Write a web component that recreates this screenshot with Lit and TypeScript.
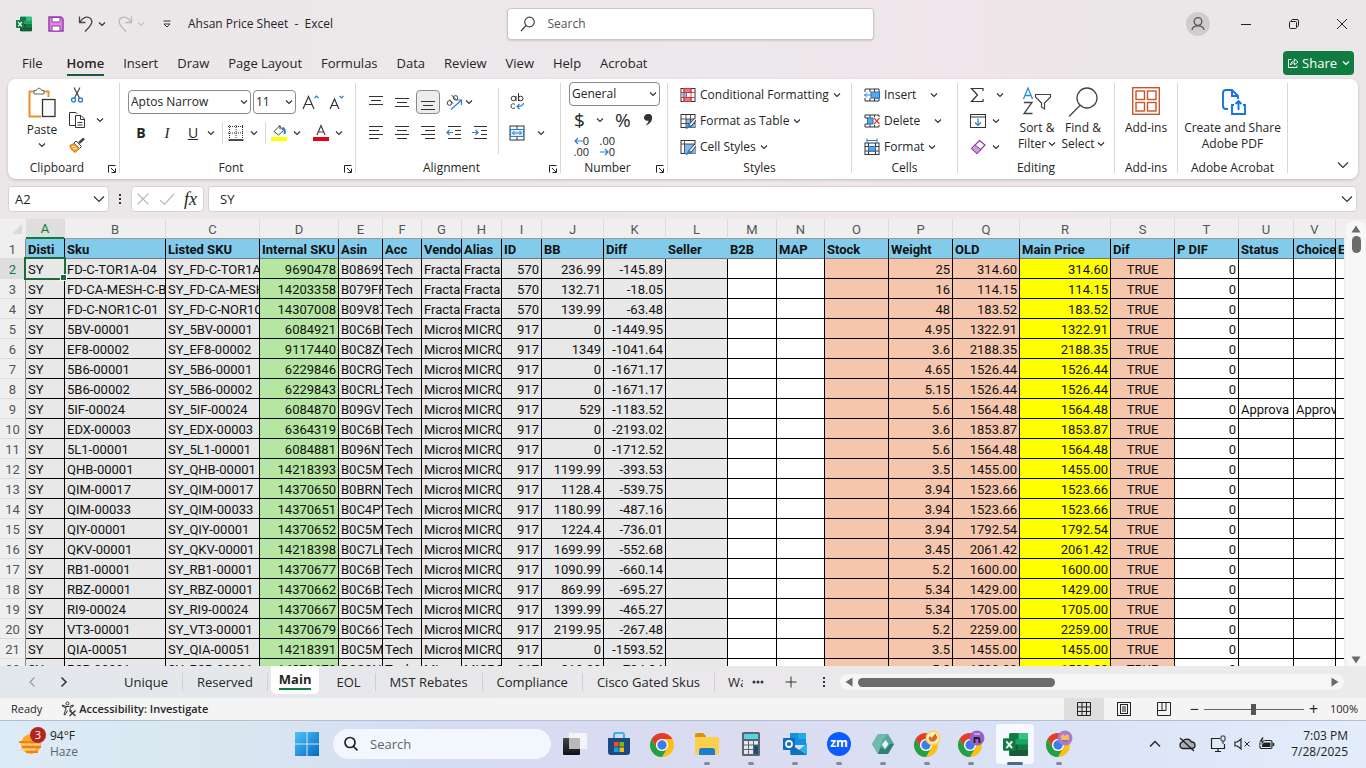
import { LitElement, html, svg, css, TemplateResult } from "lit";
import { customElement } from "lit/decorators.js";
import { classMap } from "lit/directives/class-map.js";

type Column = { id: string; width: number; title: string; kind: string };

const columns: Column[] = [
  { id: "A", width: 39, title: "Disti", kind: "grey" },
  { id: "B", width: 101, title: "Sku", kind: "grey" },
  { id: "C", width: 94, title: "Listed SKU", kind: "grey" },
  { id: "D", width: 79, title: "Internal SKU", kind: "green num" },
  { id: "E", width: 44, title: "Asin", kind: "grey" },
  { id: "F", width: 39, title: "Acc", kind: "grey" },
  { id: "G", width: 40, title: "Vendo", kind: "grey" },
  { id: "H", width: 40, title: "Alias", kind: "grey" },
  { id: "I", width: 40, title: "ID", kind: "grey num" },
  { id: "J", width: 62, title: "BB", kind: "grey num" },
  { id: "K", width: 62, title: "Diff", kind: "grey num" },
  { id: "L", width: 62, title: "Seller", kind: "grey" },
  { id: "M", width: 49, title: "B2B", kind: "" },
  { id: "N", width: 48, title: "MAP", kind: "" },
  { id: "O", width: 64, title: "Stock", kind: "peach" },
  { id: "P", width: 64, title: "Weight", kind: "peach num" },
  { id: "Q", width: 67, title: "OLD", kind: "peach num" },
  { id: "R", width: 91, title: "Main Price", kind: "yellow num" },
  { id: "S", width: 64, title: "Dif", kind: "peach mid" },
  { id: "T", width: 64, title: "P DIF", kind: "num" },
  { id: "U", width: 55, title: "Status", kind: "" },
  { id: "V", width: 42, title: "Choice", kind: "" },
  { id: "W", width: 64, title: "ETA", kind: "" },
];

// sku | internal sku | asin | vendor id | BB | diff | weight | price
const source = `FD-C-TOR1A-04|9690478|B08699|570|236.99|-145.89|25|314.60
FD-CA-MESH-C-B|14203358|B079FF|570|132.71|-18.05|16|114.15
FD-C-NOR1C-01|14307008|B09V87|570|139.99|-63.48|48|183.52
5BV-00001|6084921|B0C6BF|917|0|-1449.95|4.95|1322.91
EF8-00002|9117440|B0C8ZC|917|1349|-1041.64|3.6|2188.35
5B6-00001|6229846|B0CRG5|917|0|-1671.17|4.65|1526.44
5B6-00002|6229843|B0CRLS|917|0|-1671.17|5.15|1526.44
5IF-00024|6084870|B09GV5|917|529|-1183.52|5.6|1564.48
EDX-00003|6364319|B0C6BF|917|0|-2193.02|3.6|1853.87
5L1-00001|6084881|B096NT|917|0|-1712.52|5.6|1564.48
QHB-00001|14218393|B0C5M|917|1199.99|-393.53|3.5|1455.00
QIM-00017|14370650|B0BRN|917|1128.4|-539.75|3.94|1523.66
QIM-00033|14370651|B0C4PY|917|1180.99|-487.16|3.94|1523.66
QIY-00001|14370652|B0C5M|917|1224.4|-736.01|3.94|1792.54
QKV-00001|14218398|B0C7LH|917|1699.99|-552.68|3.45|2061.42
RB1-00001|14370677|B0C6B1|917|1090.99|-660.14|5.2|1600.00
RBZ-00001|14370662|B0C6B3|917|869.99|-695.27|5.34|1429.00
RI9-00024|14370667|B0C5M|917|1399.99|-465.27|5.34|1705.00
VT3-00001|14370679|B0C661|917|2199.95|-267.48|5.2|2259.00
QIA-00051|14218391|B0C5M|917|0|-1593.52|3.5|1455.00
P2R-00001|14370678|B0C8N|917|819.99|-784.84|5.2|1500.00`;

const rows: string[][] = source.split("\n").map((line, i) => {
  const [sku, internal, asin, id, bb, diff, weight, price] = line.split("|");
  const fractal = id === "570";
  const listed = ("SY_" + sku).slice(0, 13);
  return ["SY", sku, listed, internal, asin, "Tech", fractal ? "Fracta" : "Micros",
    fractal ? "Fracta" : "MICRO", id, bb, diff, "", "", "", "", weight, price, price,
    "TRUE", "0", i === 7 ? "Approva" : "", i === 7 ? "Approv" : "", ""];
});

const icon = (w: number, h: number, body: unknown) =>
  html`<svg width=${w} height=${h} viewBox="0 0 ${w} ${h}" fill="none" stroke="#3b3b3b" aria-hidden="true">${body}</svg>`;

const chevron = (color = "#333") =>
  icon(8, 8, svg`<path d="M1 2.500L4 5.500L7 2.500" stroke=${color} stroke-width="1.200"/>`);
const bigChevron = () => icon(12, 12, svg`<path d="M1 3.500L6 8.500L11 3.500" stroke="#333" stroke-width="1.200"/>`);
const launcher = () => icon(10, 10, svg`<path d="M1.500 8.500V1.500H8.500M4 4L8 8M8.500 4.500V8.500H4.500" stroke="#222"/>`);

const excelIcon = (s: number) => html`<svg width=${s} height=${s} viewBox="0 0 24 24" aria-hidden="true">
  <rect x="6" y="1" width="18" height="22" rx="1.500" fill="#21a366"/><path d="M6 2.500A1.500 1.500 0 0 1 7.500 1H15V7H6Z" fill="#107c41"/>
  <path d="M15 1h7.500A1.500 1.500 0 0 1 24 2.500V7H15Z" fill="#33c481"/><path d="M6 12H15V17H6Z" fill="#185c37"/>
  <path d="M15 12H24V17H15Z" fill="#107c41"/><path d="M6 17H24V21.500A1.500 1.500 0 0 1 22.500 23H7.500A1.500 1.500 0 0 1 6 21.500Z" fill="#185c37"/>
  <rect x="0" y="6" width="12" height="12" rx="1" fill="#107c41"/><path d="M3.200 9L8.800 15.500M8.800 9L3.200 15.500" stroke="#fff" stroke-width="1.800"/></svg>`;

const lines = (spec: [number, number, number][]) =>
  icon(16, 16, svg`${spec.map(([x1, x2, y]) => svg`<path d="M${x1} ${y}H${x2}" stroke="#333"/>`)}`);

const ic = {
  save: () => icon(16, 16, svg`<path d="M1 1H13L15 3V15H1Z" fill="#d98be0" stroke="#9b3aa8" stroke-width="1.500"/><path d="M4 1.500H12V6H4ZM4 10H12V15H4Z" fill="#fff" stroke="#9b3aa8"/>`),
  undo: () => icon(16, 16, svg`<path d="M1.500 0.500V6.500H7.500M2 6C5 1.500 9.500 -0.500 12.500 2.500C15.500 5.500 13.500 9 7 15.500" stroke="#444" stroke-width="1.300"/>`),
  redo: () => icon(16, 16, svg`<path d="M14.500 0.500V6.500H8.500M14 6C11 1.500 6.500 -0.500 3.500 2.500C0.500 5.500 2.500 9 9 15.500" stroke="#b9b6b8" stroke-width="1.300"/>`),
  quick: () => icon(8, 8, svg`<path d="M0.500 1H7.500" stroke="#333"/><path d="M1 4L4 7L7 4Z" fill="#fff" stroke="#333"/>`),
  lens: () => icon(16, 16, svg`<circle cx="9.500" cy="6" r="4.800" stroke="#444" stroke-width="1.200"/><path d="M6 9.500L1 15" stroke="#444" stroke-width="1.300"/>`),
  user: () => icon(24, 24, svg`<circle cx="12" cy="12" r="12" fill="#cfcccd" stroke="none"/><circle cx="12" cy="9.500" r="3.800" stroke="#555" stroke-width="1.300"/><path d="M6 18C6.500 12.500 17.500 12.500 18 18" stroke="#555" stroke-width="1.300"/>`),
  min: () => icon(12, 12, svg`<path d="M1 6.500H11" stroke="#222"/>`),
  restore: () => icon(12, 12, svg`<rect x="1.500" y="3.500" width="7" height="7" rx="1" stroke="#222"/><path d="M3.500 3V2.500A1 1 0 0 1 4.500 1.500H9A1.500 1.500 0 0 1 10.500 3V7.500A1 1 0 0 1 9.500 8.500H9" stroke="#222"/>`),
  close: () => icon(12, 12, svg`<path d="M1 1L11 11M11 1L1 11" stroke="#222"/>`),
  share: () => icon(12, 12, svg`<path d="M4.500 2.500H1.500V10.500H10V8.500" stroke="#fff"/><path d="M3.500 8C4 5 5.500 4.200 7.500 4.200V2L11 5L7.500 7.800V5.800C6 5.800 4.500 6.500 3.500 8Z" stroke="#fff" stroke-width=".9"/>`),
  paste: () => icon(28, 32, svg`<path d="M6 4.500H1.500V29.500H13M16 4.500H20.500V10" stroke="#e8912d" stroke-width="2"/><path d="M6 7V3.500H8.500C9 0.500 13 0.500 13.500 3.500H16V7Z" fill="#fff" stroke="#666"/><rect x="14.500" y="12.500" width="12.500" height="17" fill="#f7f9fc" stroke="#333" stroke-width="1.300"/>`),
  cut: () => icon(16, 16, svg`<path d="M5 0.500L10.500 11M11 0.500L5.500 11" stroke="#444" stroke-width="1.200"/><circle cx="4.500" cy="13" r="2" stroke="#2b7cd3" stroke-width="1.300"/><circle cx="11.500" cy="13" r="2" stroke="#2b7cd3" stroke-width="1.300"/>`),
  copy: () => icon(16, 16, svg`<path d="M6 13.500H0.500V0.500H7L8.500 2" stroke="#333"/><path d="M6.500 3.500H12L15.500 7V15.500H6.500Z" fill="#fff" stroke="#333"/><path d="M11.500 4V7.500H15.500M8.500 10.500H13.500M8.500 13H13.500" stroke="#333"/>`),
  brush: () => icon(16, 16, svg`<path d="M15 1.500L10 6" stroke="#444" stroke-width="2.500"/><path d="M7 4L12.500 9.500L10.500 11.500L5 6Z" fill="#fff" stroke="#444"/><path d="M5 6.500L0.800 8.500Q1.500 13 6 15.500L10.500 11.500Z" fill="#f6a13a" stroke="#d9730d"/><path d="M3 9.500L6 9.500M4 12L8 11" stroke="#fff" stroke-width=".9"/>`),
  grow: () => icon(18, 16, svg`<path d="M1 15L6.500 2.500L12 15M3 10.500H10" stroke="#333" stroke-width="1.200"/><path d="M12.500 4L14.500 2L16.500 4" stroke="#2b7cd3" stroke-width="1.200"/>`),
  shrink: () => icon(18, 16, svg`<path d="M2 15L6.500 5L11 15M3.500 11.500H9.500" stroke="#333" stroke-width="1.200"/><path d="M11.500 2L13.500 4L15.500 2" stroke="#2b7cd3" stroke-width="1.200"/>`),
  border: () => icon(16, 16, svg`<path d="M0 1.500H16M1.500 0V14M14.500 0V14M8 0V14M0 8H16" stroke="#333" stroke-dasharray="1 1"/><path d="M0.500 15H15.500" stroke="#111" stroke-width="1.500"/>`),
  fill: () => icon(16, 18, svg`<path d="M8 1.500L12.500 6.500L7.500 11L3 7.500L9 1.500V5.500" stroke="#444" fill="#fff"/><path d="M11.500 3.500C14 5 14 8 13.500 10" stroke="#2b7cd3" stroke-width="2"/><rect y="13" width="16" height="4" fill="#ff0" stroke="none"/>`),
  fontColor: () => icon(16, 18, svg`<path d="M4 11L8 1.500L12 11M5.500 8H10.500" stroke="#444" stroke-width="1.200"/><rect y="13" width="16" height="4" fill="#e3001b" stroke="none"/>`),
  orient: () => icon(20, 18, svg`<g stroke="#444"><circle cx="4.500" cy="10" r="2.300"/><path d="M4.500 6.500L8 10.500M6.500 2L11.500 7"/><circle cx="10.500" cy="4.800" r="2.200"/></g><path d="M6 16.500L16 7.500M11 7H16.500V12" stroke="#2b7cd3" stroke-width="1.200"/>`),
  wrap: () => icon(16, 18, svg`<g stroke="#333"><circle cx="4.500" cy="5.500" r="2.300"/><path d="M7 3V8M9.500 0V8"/><circle cx="11.700" cy="5.500" r="2.300"/><path d="M6 11.500C4 10 2 11 2 13C2 15.500 4 16 6 15"/></g><path d="M14.500 10C14.500 13 12 13.500 8 13.500M10.500 11L8 13.500L10.500 16" stroke="#2b7cd3" stroke-width="1.200"/>`),
  merge: () => icon(16, 16, svg`<rect x="1" y="1" width="14" height="14" stroke="#333"/><path d="M1 4.500H15M1 11.500H15M8 1V4.500M8 11.500V15" stroke="#333"/><rect x="1.500" y="4.500" width="13" height="7" fill="#dcecfa" stroke="#2b7cd3"/><path d="M3.500 8H12.500M5.500 6L3.500 8L5.500 10M10.500 6L12.500 8L10.500 10" stroke="#2b7cd3"/>`),
  outdent: () => icon(16, 16, svg`<path d="M2 1.500H15M9 5.500H15M9 9.500H15M2 13.500H15" stroke="#333"/><path d="M7 7.500H1M3.500 5L1 7.500L3.500 10" stroke="#2b7cd3" stroke-width="1.200"/>`),
  indent: () => icon(16, 16, svg`<path d="M2 1.500H15M9 5.500H15M9 9.500H15M2 13.500H15" stroke="#333"/><path d="M0 7.500H6M3.500 5L6 7.500L3.500 10" stroke="#2b7cd3" stroke-width="1.200"/>`),
  comma: () => icon(12, 16, svg`<path d="M6 2C9.500 2 10.500 4 10 7C9.500 10 7 12.500 3.500 13.500C5.500 11.500 6.500 10 6.500 8.800C4 9.200 2 7.800 2 5.500C2 3.500 4 2 6 2Z" fill="#333" stroke="none"/>`),
  leftArrow: () => icon(9, 8, svg`<path d="M9 4H1M4 1L1 4L4 7" stroke="#2b7cd3" stroke-width="1.200"/>`),
  rightArrow: () => icon(9, 8, svg`<path d="M0 4H8M5 1L8 4L5 7" stroke="#2b7cd3" stroke-width="1.200"/>`),
  cond: () => icon(16, 16, svg`<rect x="1" y="1.500" width="14" height="13" fill="#fff" stroke="#333"/><rect x="4" y="1.500" width="7" height="4" fill="#f27878" stroke="#d13438"/><rect x="1.500" y="6" width="5" height="4.500" fill="#9cc7ee" stroke="none"/><rect x="4" y="10.500" width="7" height="4" fill="#f27878" stroke="#d13438"/><path d="M4 1V15M11 1V15M1 5.500H15M1 10.500H15" stroke="#c8363a" stroke-width=".9"/><path d="M6.500 6V10.500" stroke="#2b7cd3"/>`),
  tableFmt: () => icon(16, 16, svg`<rect x="1" y="1.500" width="14" height="13" fill="#fff" stroke="#333"/><path d="M6 6H15V14.500H6Z" fill="#7db9ec" stroke="none"/><path d="M1 6H15M1 10.500H15M6 1.500V14.500M10.500 1.500V14.500" stroke="#444" stroke-width=".9"/><path d="M15 5L9 11.500L11 13.500L16 7" fill="#fff" stroke="#333"/><path d="M9 11.500L6 15.500L11 13.500Z" fill="#2b7cd3" stroke="#2b7cd3"/>`),
  cellFmt: () => icon(16, 16, svg`<rect x="1" y="1.500" width="14" height="13" fill="#fff" stroke="#333"/><path d="M4.500 5H15V14.500H4.500Z" fill="#7db9ec" stroke="none"/><path d="M1 5H15M4.500 1.500V14.500" stroke="#444" stroke-width=".9"/><path d="M15 5L9 11.500L11 13.500L16 7" fill="#fff" stroke="#333"/><path d="M9 11.500L6 15.500L11 13.500Z" fill="#2b7cd3" stroke="#2b7cd3"/>`),
  insert: () => icon(16, 16, svg`<path d="M1 5V2H15V14H1V11M6 2V5M10.500 2V14M6 11V14M10.500 11H15" stroke="#333"/><rect x="7" y="5" width="8.500" height="6" fill="#5aa9e6" stroke="#1f6fbf"/><path d="M7 8H0.500M3 5.500L0.500 8L3 10.500" stroke="#2b7cd3"/>`),
  del: () => icon(16, 16, svg`<path d="M1 5V2H15V4M1 11V14H15V12M6 2V5M10.500 2V4M6 11V14M10.500 12V14M1 5H4M1 11H4" stroke="#333"/><rect x="3.500" y="5" width="5.500" height="6" fill="#5aa9e6" stroke="#1f6fbf"/><path d="M10 5L15.500 11M15.500 5L10 11" stroke="#e03c31" stroke-width="1.200"/>`),
  format: () => icon(16, 18, svg`<path d="M3 2.500H13M3 0.500V4.500M13 0.500V4.500" stroke="#2b7cd3"/><rect x="1" y="5" width="14" height="11.500" stroke="#333"/><path d="M4.500 5V16.500M11.500 5V16.500M1 8.500H15M1 13H15" stroke="#333"/><rect x="4.500" y="8.500" width="7" height="4.500" fill="#5aa9e6" stroke="#1f6fbf"/>`),
  sum: () => icon(14, 16, svg`<path d="M13 4V1.500H1.500L7.500 8L1.500 14.500H13V12" stroke="#333" stroke-width="1.200"/>`),
  down: () => icon(16, 14, svg`<rect x="0.500" y="0.500" width="15" height="13" stroke="#333"/><path d="M0.500 3H15.500" stroke="#333"/><path d="M8 4.500V11M5 8.500L8 11.500L11 8.500" stroke="#2b7cd3" stroke-width="1.200"/>`),
  eraser: () => icon(16, 16, svg`<path d="M9.500 1.500L15 6L7 14.500L1.500 9.500Z" fill="#fff" stroke="#8a3f9e" stroke-width="1.200"/><path d="M5 6L11 10.500L7 14.500L1.500 9.500Z" fill="#cf9bdc" stroke="#8a3f9e"/>`),
  sort: () => icon(30, 30, svg`<path d="M1.500 12L6 1L10.500 12M3 8.500H9" stroke="#2b8fd3" stroke-width="1.300"/><path d="M2 15.500H10L2 26.500H10.500" stroke="#444" stroke-width="1.300"/><path d="M13.500 7.500H28.500V10L22.500 16V22L19.500 20V16L13.500 10Z" stroke="#444" stroke-width="1.200"/>`),
  find: () => icon(30, 30, svg`<circle cx="19" cy="11" r="10" stroke="#444" stroke-width="1.300"/><path d="M12 18.500L1 29.500" stroke="#444" stroke-width="1.300"/>`),
  addins: () => icon(28, 28, svg`<g stroke="#c8562a" stroke-width="1.400"><rect x="0.700" y="0.700" width="26.600" height="26.600"/><rect x="4" y="4" width="8.500" height="8.500"/><rect x="15.500" y="4" width="8.500" height="8.500"/><rect x="4" y="15.500" width="8.500" height="8.500"/><rect x="15.500" y="15.500" width="8.500" height="8.500"/></g>`),
  pdf: () => icon(26, 28, svg`<g stroke="#1473e6" stroke-width="1.900"><path d="M8 22H6Q3 22 3 19V6Q3 3 6 3H12L18 9V12M12 3V9H18"/><path d="M14 18H12V27H25V18H23M18.500 23V14.500M15.500 17L18.500 14L21.500 17"/></g>`),
  x: () => icon(14, 14, svg`<path d="M1.500 1.500L12.500 12.500M12.500 1.500L1.500 12.500" stroke="#bbb" stroke-width="1.200"/>`),
  check: () => icon(16, 14, svg`<path d="M1 8L5.500 12.500L15 2" stroke="#bbb" stroke-width="1.200"/>`),
  prev: () => icon(8, 12, svg`<path d="M6.500 1.500L2 6L6.500 10.500" stroke="#999" stroke-width="1.200"/>`),
  next: () => icon(8, 12, svg`<path d="M1.500 1.500L6 6L1.500 10.500" stroke="#333" stroke-width="1.500"/>`),
  plus: () => icon(12, 12, svg`<path d="M0.500 6H11.500M6 0.500V11.500" stroke="#333"/>`),
  more: () => icon(12, 4, svg`<g fill="#333" stroke="none"><circle cx="2" cy="2" r="1.500"/><circle cx="6" cy="2" r="1.500"/><circle cx="10" cy="2" r="1.500"/></g>`),
  dots: () => icon(4, 12, svg`<g fill="#333" stroke="none"><rect x="1" y="1" width="2" height="2"/><rect x="1" y="5" width="2" height="2"/><rect x="1" y="9" width="2" height="2"/></g>`),
  access: () => icon(16, 16, svg`<g stroke="#333"><circle cx="6.500" cy="2.500" r="1.500"/><path d="M1.500 4L5 5.500H8.500L12 4L12.500 5L9 7V9L11 10M5 5.500L4.800 8L3 13.500L4 14L6.500 9.500M1.500 4L1.200 5L4.800 7"/><path d="M8.500 9.500L14.500 15M14.500 9.500L8.500 15" stroke-width="1.300"/></g>`),
  normal: () => icon(14, 14, svg`<path d="M0.500 0.500H13.500V13.500H0.500ZM5 0.500V13.500M9.500 0.500V13.500M0.500 5H13.500M0.500 9.500H13.500" stroke="#222"/>`),
  page: () => icon(14, 14, svg`<rect x="0.500" y="0.500" width="13" height="13" stroke="#222"/><rect x="3.500" y="2.500" width="7" height="9" stroke="#222"/><path d="M5 5H9M5 7H9M5 9H9" stroke="#222"/>`),
  breaks: () => icon(14, 14, svg`<path d="M0.500 0.500H13.500V13.500H0.500ZM5 0.500V8.500M9 0.500V8.500H0.500" stroke="#222"/>`),
};

const chromeIcon = (badge?: string) => html`<svg width="28" height="28" viewBox="0 0 28 28" aria-hidden="true">
  <circle cx="13" cy="15" r="12" fill="#fbc116"/>
  <path d="M2.600 9A12 12 0 0 1 23.400 9H13A6 6 0 0 0 7.800 18Z" fill="#e33b2e"/>
  <path d="M2.600 9A12 12 0 0 0 13 27L18.200 18A6 6 0 0 1 7.800 18Z" fill="#22a04a"/>
  <circle cx="13" cy="15" r="6" fill="#fff"/><circle cx="13" cy="15" r="4.700" fill="#3b7ded"/>
  ${badge === "gold" ? svg`<circle cx="20" cy="8" r="7.500" fill="#f6d354"/><circle cx="20" cy="8" r="6" fill="#fdf0b8"/><path d="M15.500 8L17 6L18.500 8L22.500 3.500L24.500 8L21.500 11.500H17Z" fill="#d9662b"/>` : ""}
  ${badge === "violet" ? svg`<circle cx="20" cy="8" r="7.500" fill="#9660c8"/><path d="M17 4H23" stroke="#c9a1ea" stroke-width="2"/><path d="M17.500 13V8H21A1.500 1.500 0 0 1 22.500 9.500V13" stroke="#222" stroke-width="1.800" fill="none"/>` : ""}
  ${badge === "smile" ? svg`<circle cx="20" cy="8" r="7.500" fill="#a77bd6"/><path d="M16 6L18 4L20 6L22 4L24 6V10H16Z" fill="#f3c24c"/><path d="M17 10Q20 13 23 10" stroke="#b2527b" fill="none"/>` : ""}
</svg>`;

const apps: { name: string; art: TemplateResult; running?: boolean; active?: boolean }[] = [
  { name: "Task view", art: html`<svg width="26" height="26" viewBox="0 0 26 26"><defs><linearGradient id="tv" y2="1" x2="0"><stop stop-color="#444"/><stop offset="1" stop-color="#111"/></linearGradient></defs><rect x="7" y="2" width="18" height="16" fill="#f4f4f6"/><rect x="1" y="7" width="17" height="17" rx="1" fill="url(#tv)"/><rect x="7" y="7" width="11" height="11" fill="#b9b9b9"/></svg>` },
  { name: "Store", art: html`<svg width="26" height="26" viewBox="0 0 26 26"><path d="M8 8V4Q8 2 10 2H16Q18 2 18 4V8" fill="none" stroke="#35b3ea" stroke-width="2"/><path d="M2 7H24V21Q24 24 21 24H5Q2 24 2 21Z" fill="#1c4a80"/><rect x="8" y="11" width="4.500" height="4.500" fill="#f25022"/><rect x="13.500" y="11" width="4.500" height="4.500" fill="#7fba00"/><rect x="8" y="16.500" width="4.500" height="4.500" fill="#00a4ef"/><rect x="13.500" y="16.500" width="4.500" height="4.500" fill="#ffb900"/></svg>` },
  { name: "Chrome", art: chromeIcon() },
  { name: "File Explorer", art: html`<svg width="26" height="26" viewBox="0 0 26 26"><path d="M1 4Q1 2 3 2H9L12 5V8H1Z" fill="#d9920f"/><path d="M1 6H23Q25 6 25 8V22Q25 24 23 24H3Q1 24 1 22Z" fill="#fcd04e"/><path d="M5 24V20Q5 17 8 17H18Q21 17 21 20V24Z" fill="#1e7cc9"/></svg>`, running: true },
  { name: "Calculator", art: html`<svg width="26" height="26" viewBox="0 0 26 26"><rect x="4" y="1" width="18" height="24" rx="1.500" fill="#5d666e"/><rect x="6" y="3" width="14" height="5" fill="#54d4e4"/><g fill="#e6e9eb"><rect x="6" y="10" width="4" height="3.500"/><rect x="11" y="10" width="4" height="3.500"/><rect x="16" y="10" width="4" height="3.500"/><rect x="6" y="14.500" width="4" height="3.500"/><rect x="11" y="14.500" width="4" height="3.500"/><rect x="6" y="19" width="4" height="4"/><rect x="11" y="19" width="4" height="4"/></g><rect x="16" y="14.500" width="4" height="8.500" fill="#1b4d75"/></svg>`, running: true },
  { name: "Outlook", art: html`<svg width="26" height="26" viewBox="0 0 26 26"><rect x="8" y="2" width="16" height="12" fill="#1490df"/><rect x="16" y="2" width="8" height="6" fill="#28a8ea"/><path d="M8 14L17 19L25 12V23Q25 24 24 24H9Q8 24 8 23Z" fill="#2bb0ee"/><path d="M8 13L25 24H9Z" fill="#1272b8"/><rect x="1" y="7" width="12" height="12" rx="1" fill="#0f6cbd"/><circle cx="7" cy="13" r="3" fill="none" stroke="#fff" stroke-width="1.800"/></svg>`, running: true },
  { name: "Zoom", art: html`<span class="zm">zm</span>`, running: true },
  { name: "Sync", art: html`<svg width="26" height="26" viewBox="0 0 26 26"><path d="M8 3H18L24 13L18 23H8L2 13Z" fill="#54a89c"/><path d="M2 13L8 3H18L13 8L11 13L8 23Z" fill="#6fb9ad"/><path d="M8 23L11 16L15 19L20 13H24L18 23Z" fill="#2f7f78"/><path d="M15.500 9L18.500 13L15 18L12 13.500Z" fill="#e6f7f4"/></svg>`, running: true },
  { name: "Chrome profile 1", art: chromeIcon("gold"), running: true },
  { name: "Chrome profile 2", art: chromeIcon("violet"), running: true },
  { name: "Excel", art: excelIcon(25), running: true, active: true },
  { name: "Chrome profile 3", art: chromeIcon("smile"), running: true },
];

@customElement("excel-ribbon")
export class ExcelRibbon extends LitElement {
  static styles = css`
    :host { display: block; font: 12px/16px "Open Sans", "Noto Sans", sans-serif; color: #252525; }
    button, select { font: inherit; color: inherit; background: none; border: 0; padding: 0; margin: 0; }
    svg { display: block; flex: none; }
    .ribbon { display: flex; margin: 0 8px; height: 100px; background: #fff; border-radius: 8px; box-shadow: 0 1px 3px #0003; }
    .sep { width: 1px; flex: none; margin: 4px 0 6px; background: #d8d8d8; }
    .group { flex: none; display: flex; flex-direction: column; }
    .body { height: 79px; box-sizing: border-box; }
    .cap { position: relative; display: flex; justify-content: center; align-items: center; height: 20px; }
    .launch { padding-right: 13px; }
    .cap button { position: absolute; right: 2px; bottom: 4px; }
    .rows { display: flex; flex-direction: column; padding-top: 3px; }
    .item { display: flex; flex: none; align-items: center; height: 26px; gap: 4px; white-space: nowrap; }
    .row { display: flex; align-items: center; height: 24px; }
    .two { display: flex; flex-direction: column; gap: 7px; padding-top: 11px; }
    .b { display: flex; align-items: center; justify-content: center; width: 26px; height: 24px; }
    .on { border: 1px solid #8a8a8a; border-radius: 4px; background: #ededed; width: 24px; margin: 0 1px; box-sizing: border-box; }
    .arr { width: 10px; height: 24px; display: flex; align-items: center; justify-content: center; }
    .combo { display: grid; align-items: center; border: 1px solid #8a8a8a; border-radius: 4px; box-sizing: border-box; height: 24px; }
    .combo > * { grid-area: 1 / 1; }
    .combo select { appearance: none; width: 100%; height: 22px; padding-left: 2px; outline: none; }
    .combo svg { justify-self: end; margin-right: 2px; pointer-events: none; }
    .tall { display: flex; flex-direction: column; align-items: center; text-align: center; }
    .tall span { display: flex; align-items: center; gap: 2px; }
    .clip { width: 111px; }
    .clip .body { display: flex; padding: 3px 0 0 19px; }
    .paste { gap: 3px; width: 30px; padding-top: 5px; }
    .tools { display: grid; grid-template-columns: 26px 20px; grid-auto-rows: 25px; align-content: start; align-items: center; justify-items: center; padding-left: 7px; }
    .tools .last { grid-column: 1; }
    .fontg { width: 235px; }
    .fontg .two { padding-left: 8px; }
    .family { width: 123px; }
    .size { width: 43px; margin: 0 2px; }
    .bold { font-weight: 700; font-size: 14px; }
    .ital { font: italic 15px "Liberation Serif", serif; }
    .under { text-decoration: underline; font-size: 14px; }
    .mini { width: 1px; height: 22px; background: #d8d8d8; }
    .wide { margin-left: 6px; }
    .align { width: 204px; }
    .align .body { display: flex; padding-left: 7px; }
    .arow { display: flex; height: 24px; }
    .orient { display: flex; align-items: center; width: 42px; padding-left: 4px; }
    .vsep { width: 1px; height: 66px; margin: 9px 5px 0; background: #d8d8d8; }
    .num { width: 106px; }
    .num .body { padding: 3px 7px 0 8px; }
    .general { width: 91px; }
    .nrow { display: flex; align-items: center; height: 28px; font-size: 19px; padding-left: 5px; gap: 11px; }
    .dec { display: flex; gap: 8px; padding: 1px 0 0 2px; font-size: 11px; line-height: 11px; }
    .dec button { display: grid; justify-items: end; width: 18px; line-height: 11px; }
    .dec span { display: flex; align-items: center; }
    .styles { width: 183px; }
    .styles .rows { padding-left: 12px; }
    .cells { width: 105px; }
    .cells .rows { padding-left: 12px; }
    .push { margin-left: 10px; }
    .edit { width: 156px; }
    .edit .body { display: flex; }
    .edit .rows { padding-left: 12px; width: 44px; }
    .edit .item { gap: 6px; }
    .edit .tall { width: 46px; padding-top: 8px; gap: 3px; }
    .adds { width: 62px; }
    .tall.top { width: 100%; padding-top: 8px; gap: 5px; }
    .pdf { width: 109px; }
    .rest { flex: 1; display: flex; align-items: flex-end; justify-content: flex-end; padding: 0 9px 8px 0; }
  `;

  private caption(text: string, launch = false) {
    return html`<div class="cap ${launch ? "launch" : ""}">${text}${launch ? html`<button aria-label="${text} settings">${launcher()}</button>` : ""}</div>`;
  }

  render() {
    return html`<div class="ribbon">
      <section class="group clip"><div class="body">
        <button class="tall paste">${ic.paste()}<span>Paste</span>${chevron()}</button>
        <div class="tools"><button aria-label="Cut">${ic.cut()}</button><i></i>
          <button aria-label="Copy">${ic.copy()}</button>${chevron()}
          <button class="last" aria-label="Format painter">${ic.brush()}</button></div>
      </div>${this.caption("Clipboard", true)}</section><i class="sep"></i>

      <section class="group fontg"><div class="body two">
        <div class="row">
          <label class="combo family"><select aria-label="Font"><option>Aptos Narrow</option></select>${chevron()}</label>
          <label class="combo size"><select aria-label="Font size"><option>11</option></select>${chevron()}</label>
          <button class="b" aria-label="Increase font size">${ic.grow()}</button><button class="b" aria-label="Decrease font size">${ic.shrink()}</button>
        </div>
        <div class="row">
          <button class="b bold">B</button><button class="b ital">I</button><button class="b under">U</button><span class="arr">${chevron()}</span>
          <i class="mini wide"></i><button class="b" aria-label="Borders">${ic.border()}</button><span class="arr">${chevron()}</span>
          <i class="mini wide"></i><button class="b" aria-label="Fill color">${ic.fill()}</button><span class="arr">${chevron()}</span>
          <button class="b wide" aria-label="Font color">${ic.fontColor()}</button><span class="arr">${chevron()}</span>
        </div>
      </div>${this.caption("Font", true)}</section><i class="sep"></i>

      <section class="group align"><div class="body">
        <div class="two">
          <div class="arow">
            <button class="b" aria-label="Top">${lines([[1, 15, 2.5], [3, 13, 6.5], [1, 15, 10.5]])}</button>
            <button class="b" aria-label="Middle">${lines([[1, 15, 4.5], [3, 13, 8.5], [1, 15, 12.5]])}</button>
            <button class="b on" aria-label="Bottom">${lines([[1, 15, 7.5], [3, 13, 11.5], [1, 15, 15.5]])}</button>
            <button class="orient" aria-label="Orientation">${ic.orient()}${chevron()}</button>
          </div>
          <div class="arow">
            <button class="b" aria-label="Left">${lines([[1, 15, 1.5], [1, 11, 5.5], [1, 15, 9.5], [1, 11, 13.5]])}</button>
            <button class="b" aria-label="Center">${lines([[1, 15, 1.5], [3, 13, 5.5], [1, 15, 9.5], [3, 13, 13.5]])}</button>
            <button class="b" aria-label="Right">${lines([[1, 15, 1.5], [5, 15, 5.5], [1, 15, 9.5], [5, 15, 13.5]])}</button>
            <button class="b" aria-label="Outdent">${ic.outdent()}</button><button class="b" aria-label="Indent">${ic.indent()}</button>
          </div>
        </div>
        <i class="vsep"></i>
        <div class="two"><div class="arow"><button class="b" aria-label="Wrap text">${ic.wrap()}</button></div>
          <div class="arow"><button class="b" aria-label="Merge">${ic.merge()}</button><span class="arr wide">${chevron()}</span></div></div>
      </div>${this.caption("Alignment", true)}</section><i class="sep"></i>

      <section class="group num"><div class="body">
        <label class="combo general"><select aria-label="Number format"><option>General</option></select>${chevron()}</label>
        <div class="nrow"><button>$</button>${chevron()}<button>%</button><button aria-label="Comma style">${ic.comma()}</button></div>
        <div class="dec"><button><span>${ic.leftArrow()}0</span><span>.00</span></button><button><span>.00</span><span>${ic.rightArrow()}0</span></button></div>
      </div>${this.caption("Number", true)}</section><i class="sep"></i>

      <section class="group styles"><div class="body rows">
        <button class="item">${ic.cond()}Conditional Formatting${chevron()}</button>
        <button class="item">${ic.tableFmt()}Format as Table${chevron()}</button>
        <button class="item">${ic.cellFmt()}Cell Styles${chevron()}</button>
      </div>${this.caption("Styles")}</section><i class="sep"></i>

      <section class="group cells"><div class="body rows">
        <button class="item">${ic.insert()}Insert<span class="push">${chevron()}</span></button>
        <button class="item">${ic.del()}Delete<span class="push">${chevron()}</span></button>
        <button class="item">${ic.format()}Format${chevron()}</button>
      </div>${this.caption("Cells")}</section><i class="sep"></i>

      <section class="group edit"><div class="body">
        <div class="rows"><button class="item" aria-label="AutoSum">${ic.sum()}<span></span>${chevron()}</button>
          <button class="item" aria-label="Fill">${ic.down()}${chevron()}</button>
          <button class="item" aria-label="Clear">${ic.eraser()}${chevron()}</button></div>
        <button class="tall">${ic.sort()}<div>Sort &amp;<span>Filter ${chevron()}</span></div></button>
        <button class="tall">${ic.find()}<div>Find &amp;<span>Select ${chevron()}</span></div></button>
      </div>${this.caption("Editing")}</section><i class="sep"></i>

      <section class="group adds"><div class="body"><button class="tall top">${ic.addins()}Add-ins</button></div>${this.caption("Add-ins")}</section><i class="sep"></i>
      <section class="group pdf"><div class="body"><button class="tall top">${ic.pdf()}<div>Create and Share<br />Adobe PDF</div></button></div>${this.caption("Adobe Acrobat")}</section><i class="sep"></i>
      <div class="rest"><button aria-label="Ribbon options">${bigChevron()}</button></div>
    </div>`;
  }
}

@customElement("excel-sheet")
export class ExcelSheet extends LitElement {
  static styles = css`
    :host { display: flex; min-height: 0; overflow: hidden; background: #f0eff0; font: 13px/17px Roboto, sans-serif; color: #111; }
    .view { flex: 1; min-width: 0; overflow: hidden; background: #fff; }
    table { border-collapse: separate; border-spacing: 0; table-layout: fixed; width: 0; }
    th, td { box-sizing: border-box; height: 20px; padding: 2px 2px 0; overflow: hidden; white-space: nowrap; border-right: 1px solid #000; border-bottom: 1px solid #000; text-align: left; }
    col.rh { width: 26px; }
    th { font-weight: 400; color: #555; background: #f0eff0; text-align: center; padding: 2px 0 0; border-color: #dcdcdc; }
    .letters th { border-bottom-color: #999; }
    .letters th.corner { border-color: #f0eff0; padding-top: 0; }
    tbody th { border-right-color: #888; }
    tr.titles td { background: #83cbeb; font-weight: 700; border-bottom-color: #777; }
    .letters th.sel { background: #dedede; color: #107c41; border-bottom: 2px solid #107c41; line-height: 16px; }
    tbody th.sel { background: #dedede; color: #107c41; }
    .grey { background: #e8e8e8; }
    .green { background: #b5e6a2; }
    .peach { background: #f5c6ac; }
    .yellow { background: #ffff00; }
    .num { text-align: right; }
    .mid { text-align: center; }
    .titles td.num, .titles td.mid { text-align: left; }
    .titles td.plain { border-right-color: #83cbeb; }
    td.cursor { position: relative; overflow: visible; }
    .cursor::before { content: ""; position: absolute; inset: -2px; border: 2px solid #1a6b3f; }
    .cursor::after { content: ""; position: absolute; right: -3px; bottom: -3px; width: 5px; height: 5px; background: #1a6b3f; border: 1px solid #fff; }
    .corner svg { display: block; margin-left: 11px; }
    .bar { width: 20px; flex: none; margin: 2px 0 0 2px; background: #f7f7f7; border-radius: 8px 8px 0 0; display: flex; flex-direction: column; align-items: center; justify-content: space-between; padding: 4px 0 2px; box-sizing: border-box; }
    .top { display: flex; flex-direction: column; align-items: center; gap: 3px; }
    .thumb { width: 9px; height: 17px; border-radius: 5px; background: #6b6b6b; }
  `;

  render() {
    return html`<div class="view"><table>
        <colgroup><col class="rh" />${columns.map((c) => html`<col style="width:${c.width}px" />`)}</colgroup>
        <thead><tr class="letters"><th class="corner">${icon(12, 12, svg`<path d="M11 1V11H1Z" fill="#dadada" stroke="none"/>`)}</th>
          ${columns.map((c) => html`<th class=${classMap({ sel: c.id === "A" })}>${c.id}</th>`)}</tr></thead>
        <tbody>
          <tr class="titles"><th>1</th>${columns.map((c) => html`<td class="${c.kind} ${c.id === "K" || c.id === "L" ? "plain" : ""}">${c.title}</td>`)}</tr>
          ${rows.map((row, r) => html`<tr><th class=${classMap({ sel: r === 0 })}>${r + 2}</th>
            ${row.map((cell, i) => html`<td class="${columns[i].kind} ${r === 0 && i === 0 ? "cursor" : ""}">${cell}</td>`)}</tr>`)}
        </tbody></table></div>
      <div class="bar"><div class="top">${icon(10, 8, svg`<path d="M5 0.500L9.500 7.500H0.500Z" fill="#6b6b6b" stroke="none"/>`)}<i class="thumb"></i></div>
        ${icon(10, 8, svg`<path d="M5 7.500L9.500 0.500H0.500Z" fill="#6b6b6b" stroke="none"/>`)}</div>`;
  }
}

@customElement("desktop-taskbar")
export class DesktopTaskbar extends LitElement {
  static styles = css`
    :host { display: grid; grid-template-columns: 1fr auto 1fr; align-items: center; height: 48px; box-sizing: border-box; border-top: 1px solid #b4bdd6; padding-bottom: 1px;
      background: linear-gradient(90deg, #dcebf6, #d9e6f0 18%, #d5dcf3 32%, #dbdcf0 55%, #d9e2f6 75%, #e4edfa); font: 12px/16px "Open Sans", "Noto Sans", sans-serif; color: #222; }
    button, input { font: inherit; color: inherit; background: none; border: 0; padding: 0; margin: 0; outline: none; }
    svg { display: block; flex: none; }
    .weather { display: flex; align-items: center; gap: 4px; padding-left: 18px; text-align: left; justify-self: start; }
    .weather svg { margin-bottom: 5px; }
    .weather small { display: block; font-size: 12px; color: #5c6470; }
    .center { display: flex; align-items: center; }
    .app { position: relative; display: flex; align-items: center; justify-content: center; width: 44px; height: 44px; border-radius: 4px; }
    .active::before { content: ""; position: absolute; inset: 2px 3px; border-radius: 4px; background: #f6f9fe; }
    .app > * { position: relative; }
    .app .dot { position: absolute; bottom: 1px; left: 19px; width: 6px; height: 3px; border-radius: 2px; background: #83899a; }
    .active .dot { left: 14px; width: 16px; background: #4d6b86; }
    .search { display: flex; align-items: center; gap: 12px; width: 218px; height: 30px; padding-left: 11px; box-sizing: border-box; margin: 0 2px 0 4px; border-radius: 15px; background: #f2f6fd; }
    .search input { width: 150px; font-size: 13px; }
    .search input::placeholder { color: #5d6470; opacity: 1; }
    .zm { display: block; width: 24px; height: 24px; border-radius: 12px; background: #0b5cff; color: #fff; font: 700 12px/22px "Open Sans", sans-serif; }
    .tray { display: flex; align-items: center; justify-self: end; padding-right: 18px; }
    .up { margin-right: 17px; }
    .cloud { margin-right: 14px; }
    .net, .sound { margin-right: 8px; }
    .bat { margin-right: 7px; }
    .clock { text-align: right; width: 66px; white-space: nowrap; }
  `;

  render() {
    return html`
      <button class="weather"><svg width="28" height="30" viewBox="0 0 28 30">
          <circle cx="13" cy="17" r="10" fill="#fba72a"/><path d="M1 15H18M4 20H23M8 25H20" stroke="#f27f1c" stroke-width="2"/><path d="M4 17.500H22M2 22.500H18" stroke="#fdd58b" stroke-width="1.300"/>
          <circle cx="20" cy="8" r="8" fill="#b3261e"/><text x="20" y="12" text-anchor="middle" fill="#fff" font-size="11">3</text></svg>
        <span>94°F<small>Haze</small></span></button>
      <div class="center">
        <button class="app" aria-label="Start"><svg width="24" height="24" viewBox="0 0 24 24"><defs><linearGradient id="win" x2="1" y2="1"><stop stop-color="#4cc2f5"/><stop offset="1" stop-color="#0669c4"/></linearGradient></defs><path d="M0 0H11.500V11.500H0ZM12.500 0H24V11.500H12.500ZM0 12.500H11.500V24H0ZM12.500 12.500H24V24H12.500Z" fill="url(#win)"/></svg></button>
        <label class="search">${icon(14, 16, svg`<circle cx="6" cy="6.500" r="5" stroke="#222" stroke-width="1.700"/><path d="M9.500 10.500L13.500 14.500" stroke="#222" stroke-width="1.700"/>`)}<input aria-label="Search" placeholder="Search" /></label>
        ${apps.map((a) => html`<button class="app ${a.active ? "active" : ""}" aria-label=${a.name}>${a.art}${a.running ? html`<i class="dot"></i>` : ""}</button>`)}
      </div>
      <div class="tray">
        <span class="up">${icon(12, 12, svg`<path d="M1 8.500L6 3.500L11 8.500" stroke="#222" stroke-width="1.300"/>`)}</span>
        <span class="cloud">${icon(18, 16, svg`<path d="M4.500 12.500A3.500 3.500 0 0 1 4.500 5.800A5 5 0 0 1 13.500 6A3.200 3.200 0 0 1 14 12.500Z" fill="#a9acb0" stroke="#222" stroke-width="1.300"/><path d="M2 2L16 15" stroke="#222" stroke-width="1.300"/>`)}</span>
        <span class="net">${icon(16, 18, svg`<path d="M10 3.500H1.500V13.500H14.500V9M5 16.500H11M8 13.500V16" stroke="#222" stroke-width="1.200"/><rect x="11" y="1" width="4" height="5" rx="1" stroke="#222"/><path d="M13 6V9" stroke="#222"/>`)}</span>
        <span class="sound">${icon(16, 16, svg`<path d="M1 6V10H3.500L7 13V3L3.500 6Z" stroke="#222" stroke-width="1.200"/><path d="M10.500 5.500L15.500 10.500M15.500 5.500L10.500 10.500" stroke="#222"/>`)}</span>
        <span class="bat">${icon(17, 16, svg`<rect x="2" y="4.500" width="12" height="8" rx="1.500" stroke="#222" stroke-width="1.200"/><rect x="4" y="6.500" width="8.500" height="4.500" fill="#222" stroke="none"/><path d="M15.500 7V10" stroke="#222" stroke-width="1.500"/><path d="M4 1L1 6H3.500L2.500 10L7 5H4.500L6 1Z" fill="#222" stroke="#e4edfa" stroke-width=".7"/>`)}</span>
        <div class="clock">7:03 PM<br />7/28/2025</div>
      </div>`;
  }
}

@customElement("app-root")
export class AppRoot extends LitElement {
  static styles = css`
    :host { display: flex; flex-direction: column; height: 100vh; overflow: hidden; color: #252525;
      font: 12px/16px "Open Sans", "Noto Sans", sans-serif; background: linear-gradient(90deg, #ebe7e9, #ece8eb 55%, #f0e5ea 70%, #ebe7e9 82%); }
    button, input { font: inherit; color: inherit; background: none; border: 0; padding: 0; margin: 0; outline: none; }
    a { color: inherit; text-decoration: none; }
    svg { display: block; flex: none; }
    .title { display: grid; grid-template-columns: 1fr 367px 1fr; align-items: center; height: 48px; flex: none; padding-left: 14px; }
    .left { display: flex; align-items: center; padding-left: 2px; }
    .left .save { margin: 0 14px 0 16px; }
    .left .arr { margin: 0 11px 0 4px; }
    .left .quick { margin: 0 17px 0 7px; }
    .search { display: flex; align-items: center; gap: 12px; height: 32px; box-sizing: border-box; padding-left: 12px; background: #fff; border: 1px solid #c9c6c8; border-radius: 4px; box-shadow: 0 1px 2px #0002; }
    .search input { flex: 1; font-size: 12px; }
    .search input::placeholder { color: #555; opacity: 1; }
    .right { display: flex; align-items: center; justify-content: flex-end; }
    .right button { width: 48px; height: 32px; display: grid; place-items: center; }
    .tabs { display: flex; align-items: center; height: 31px; box-sizing: border-box; flex: none; padding: 0 12px 2px 22px; font-size: 13px; }
    .tabs nav { display: flex; flex: 1; gap: 19px; }
    .tabs a { white-space: nowrap; padding: 4px 0 2px; border-bottom: 2px solid transparent; line-height: 18px; }
    .tabs a:nth-child(2) { font-weight: 600; border-color: #185c37; margin-left: 5px; }
    .share { display: flex; align-items: center; gap: 3px; height: 24px; padding: 0 4px; background: #107c41; color: #fff; border-radius: 4px; }
    .share svg:last-child { margin-left: 2px; }
    .formula { display: flex; align-items: center; height: 26px; flex: none; margin: 7px 9px 7px 8px; font-size: 13px; }
    .box { display: flex; align-items: center; height: 26px; box-sizing: border-box; background: #fff; border: 1px solid #d6d2d4; border-radius: 4px; }
    .name { width: 101px; padding: 0 4px 0 6px; }
    .name input { width: 78px; }
    .formula .dots { margin: 0 9px; }
    .fx { width: 73px; padding-left: 4px; gap: 9px; margin-right: 4px; }
    .fx em { font: italic 18px/20px "Liberation Serif", serif; }
    .entry { flex: 1; padding: 0 3px 0 11px; }
    .entry input { flex: 1; }
    excel-sheet { flex: 1; }
    .sheets { display: flex; align-items: center; height: 32px; flex: none; font-size: 13px; background: linear-gradient(90deg, #e2e7eb, #eae8ea 50%, #ebebec); }
    .sheets .arrows { display: flex; gap: 24px; padding: 0 42px 0 28px; }
    .sheets nav { display: flex; align-items: center; height: 32px; }
    .sheets a { padding: 0 14px; white-space: nowrap; border-right: 1px solid #cfcfd2; line-height: 18px; }
    .sheets a.cur { background: #fff; font-weight: 700; padding: 4px 8px; border: 0; margin: 0 3px 5px; border-radius: 0 0 5px 5px; }
    .sheets a.cur span { display: block; line-height: 18px; border-bottom: 2px solid #107c41; }
    .sheets .clip { width: 15px; overflow: hidden; padding: 0 0 0 13px; border: 0; }
    .sheets button { margin-left: 21px; }
    .sheets .more { margin-left: 9px; }
    .sheets .kebab { margin: 0 14px 0 25px; }
    .hbar { flex: 1; display: flex; align-items: center; gap: 5px; height: 16px; margin-right: 22px; padding: 0 5px; border-radius: 8px; background: #f6f6f6; }
    .hbar span { flex: 1; }
    .hbar i { display: block; width: 42%; height: 9px; border-radius: 5px; background: #6b6b6b; }
    .status { display: flex; align-items: center; height: 22px; flex: none; background: #f4f4f4; font-size: 11px; padding: 0 8px 0 11px; }
    .status .acc { display: flex; align-items: center; gap: 2px; flex: 1; padding-left: 19px; font-weight: 600; }
    .views { display: flex; }
    .views button { width: 40px; height: 22px; display: grid; place-items: center; }
    .views button:first-child { background: #dedede; }
    .zoom { display: flex; align-items: center; gap: 5px; padding: 0 12px 0 6px; font-size: 16px; }
    .zoom input { appearance: none; width: 100px; height: 12px; background: linear-gradient(#666, #666) center / 100% 1px no-repeat; }
    .zoom input::-webkit-slider-thumb { appearance: none; width: 5px; height: 11px; background: #555; }
  `;

  render() {
    const menu = ["File", "Home", "Insert", "Draw", "Page Layout", "Formulas", "Data", "Review", "View", "Help", "Acrobat"];
    const sheets = ["Unique", "Reserved", "Main", "EOL", "MST Rebates", "Compliance", "Cisco Gated Skus"];
    return html`
      <header class="title">
        <div class="left">${excelIcon(16)}<button class="save" aria-label="Save">${ic.save()}</button>
          <button aria-label="Undo">${ic.undo()}</button><span class="arr">${chevron()}</span>
          <button aria-label="Redo">${ic.redo()}</button><span class="arr">${chevron("#c5c2c4")}</span>
          <button class="quick" aria-label="Customize">${ic.quick()}</button><span>Ahsan Price Sheet&nbsp; -&nbsp; Excel</span></div>
        <label class="search">${ic.lens()}<input aria-label="Search" placeholder="Search" /></label>
        <div class="right"><button aria-label="Account">${ic.user()}</button><button aria-label="Minimize">${ic.min()}</button>
          <button aria-label="Restore">${ic.restore()}</button><button aria-label="Close">${ic.close()}</button></div>
      </header>
      <div class="tabs"><nav>${menu.map((m) => html`<a href="#">${m}</a>`)}</nav>
        <button class="share">${ic.share()}Share${chevron("#fff")}</button></div>
      <excel-ribbon></excel-ribbon>
      <div class="formula">
        <label class="box name"><input aria-label="Name box" value="A2" />${bigChevron()}</label><span class="dots">${ic.dots()}</span>
        <div class="box fx">${ic.x()}${ic.check()}<em>fx</em></div>
        <label class="box entry"><input aria-label="Formula" value="SY" />${bigChevron()}</label>
      </div>
      <excel-sheet></excel-sheet>
      <div class="sheets"><div class="arrows">${ic.prev()}${ic.next()}</div>
        <nav>${sheets.map((s) => html`<a href="#" class=${classMap({ cur: s === "Main" })}><span>${s}</span></a>`)}<a href="#" class="clip">Wa</a></nav>
        <button class="more" aria-label="All sheets">${ic.more()}</button><button aria-label="New sheet">${ic.plus()}</button><span class="kebab">${ic.dots()}</span>
        <div class="hbar">${icon(8, 10, svg`<path d="M0.500 5L7.500 0.500V9.500Z" fill="#6b6b6b" stroke="none"/>`)}<span><i></i></span>${icon(8, 10, svg`<path d="M7.500 5L0.500 0.500V9.500Z" fill="#6b6b6b" stroke="none"/>`)}</div>
      </div>
      <footer class="status">Ready<span class="acc">${ic.access()}Accessibility: Investigate</span>
        <div class="views"><button aria-label="Normal">${ic.normal()}</button><button aria-label="Page layout">${ic.page()}</button><button aria-label="Page break">${ic.breaks()}</button></div>
        <label class="zoom">−<input type="range" aria-label="Zoom" value="50" />+</label>100%
      </footer>
      <desktop-taskbar></desktop-taskbar>`;
  }
}
